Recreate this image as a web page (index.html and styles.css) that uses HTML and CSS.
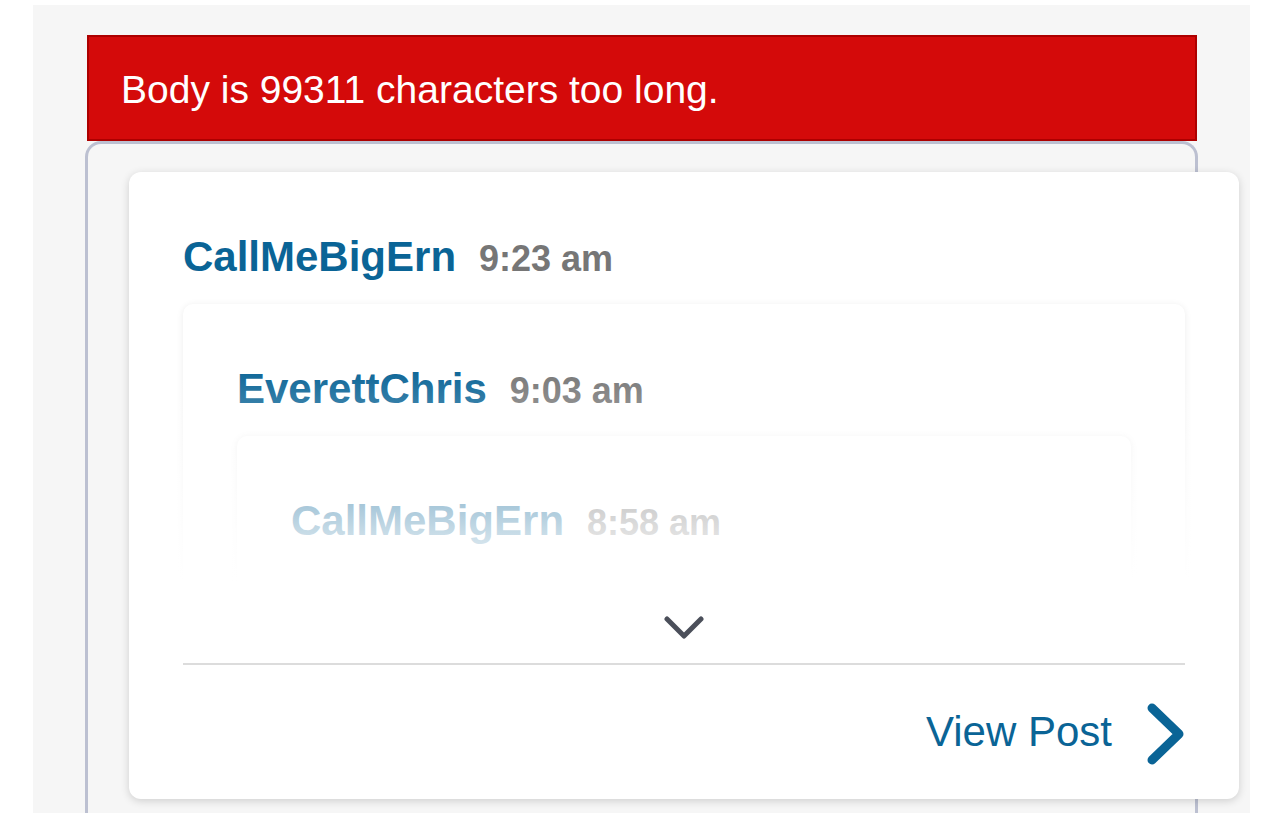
FILE: index.html
```html
<!DOCTYPE html>
<html lang="en">
<head>
<meta charset="utf-8">
<title>Post preview</title>
<link rel="stylesheet" href="styles.css">
</head>
<body>
<div class="page">
  <div class="banner">Body is 99311 characters too long.</div>
  <div class="box">
    <div class="card">
      <div class="meta">
        <span class="author">CallMeBigErn</span>
        <span class="time">9:23 am</span>
      </div>
      <div class="thread">
        <div class="quote">
          <div class="meta">
            <span class="author">EverettChris</span>
            <span class="time">9:03 am</span>
          </div>
          <div class="quote">
            <div class="meta">
              <span class="author">CallMeBigErn</span>
              <span class="time">8:58 am</span>
            </div>
            <div class="filler"></div>
          </div>
        </div>
      </div>
      <div class="expand">
        <svg class="chev-down" width="40" height="24" viewBox="0 0 40 24" aria-hidden="true">
          <polyline points="3,3 20,20 37,3" fill="none" stroke="#4b4f5a" stroke-width="5" stroke-linecap="round" stroke-linejoin="round"/>
        </svg>
      </div>
      <div class="footer">
        <span class="view">View Post</span>
        <svg class="chev-right" width="38" height="64" viewBox="0 0 38 64" aria-hidden="true">
          <polyline points="5,6 32,32 5,58" fill="none" stroke="#0a6496" stroke-width="9" stroke-linecap="round" stroke-linejoin="round"/>
        </svg>
      </div>
    </div>
  </div>
</div>
</body>
</html>
```

FILE: styles.css
```css
* { box-sizing: border-box; }

html, body {
  margin: 0;
  padding: 0;
  background: #ffffff;
  font-family: "Liberation Sans", Arial, Helvetica, sans-serif;
}

.page {
  margin: 5px 0 0 33px;
  width: 1217px;
  height: 808px;
  background: #f6f6f6;
  padding: 30px 0 0 52px;
  overflow: hidden;
}

.banner {
  margin-left: 2px;
  width: 1110px;
  height: 106px;
  background: #d40a0a;
  border: 2px solid #ad0000;
  color: #ffffff;
  font-size: 39px;
  line-height: 44px;
  padding: 31px 0 0 32px;
  white-space: nowrap;
}

.box {
  width: 1113px;
  height: 760px;
  border: 3px solid #bcc0d1;
  border-bottom: none;
  border-radius: 16px 16px 0 0;
  background: #f6f6f6;
  padding-top: 28px;
}

.card {
  margin-left: 41px;
  width: 1110px;
  background: #ffffff;
  border-radius: 12px;
  box-shadow: 0 2px 8px rgba(0, 0, 0, 0.16);
  padding: 61px 54px 0 54px;
}

.meta {
  display: flex;
  align-items: baseline;
  gap: 23px;
  height: 48px;
  margin-bottom: 23px;
  white-space: nowrap;
}

.author {
  color: #0a6496;
  font-weight: bold;
  font-size: 42px;
  line-height: 48px;
}

.time {
  color: #767676;
  font-weight: bold;
  font-size: 36px;
  line-height: 48px;
}

.thread {
  position: relative;
  height: 300px;
  margin: -10px -20px 0 -20px;
  padding: 10px 20px 0 20px;
  overflow: hidden;
}

.thread::after {
  content: "";
  position: absolute;
  left: 0;
  right: 0;
  top: 0;
  bottom: 0;
  background: linear-gradient(to bottom,
    rgba(255, 255, 255, 0) 0%,
    rgba(255, 255, 255, 0) 24%,
    rgba(255, 255, 255, 0.72) 76%,
    rgba(255, 255, 255, 1) 96%);
}

.quote {
  background: #ffffff;
  border-radius: 10px;
  box-shadow: 0 1px 7px rgba(0, 0, 0, 0.08);
  padding: 61px 54px 0 54px;
  height: 420px;
}

.quote .quote {
  height: 300px;
}

.filler {
  height: 120px;
}

.expand {
  height: 71px;
  display: flex;
  justify-content: center;
  align-items: flex-start;
  padding-top: 22px;
  border-bottom: 2px solid #dcdcdc;
}

.footer {
  height: 134px;
  display: flex;
  justify-content: flex-end;
  align-items: center;
  gap: 35px;
}

.view {
  color: #0a6496;
  font-size: 42px;
  line-height: 48px;
}

.chev-right {
  display: block;
  margin-top: 3px;
}
```
